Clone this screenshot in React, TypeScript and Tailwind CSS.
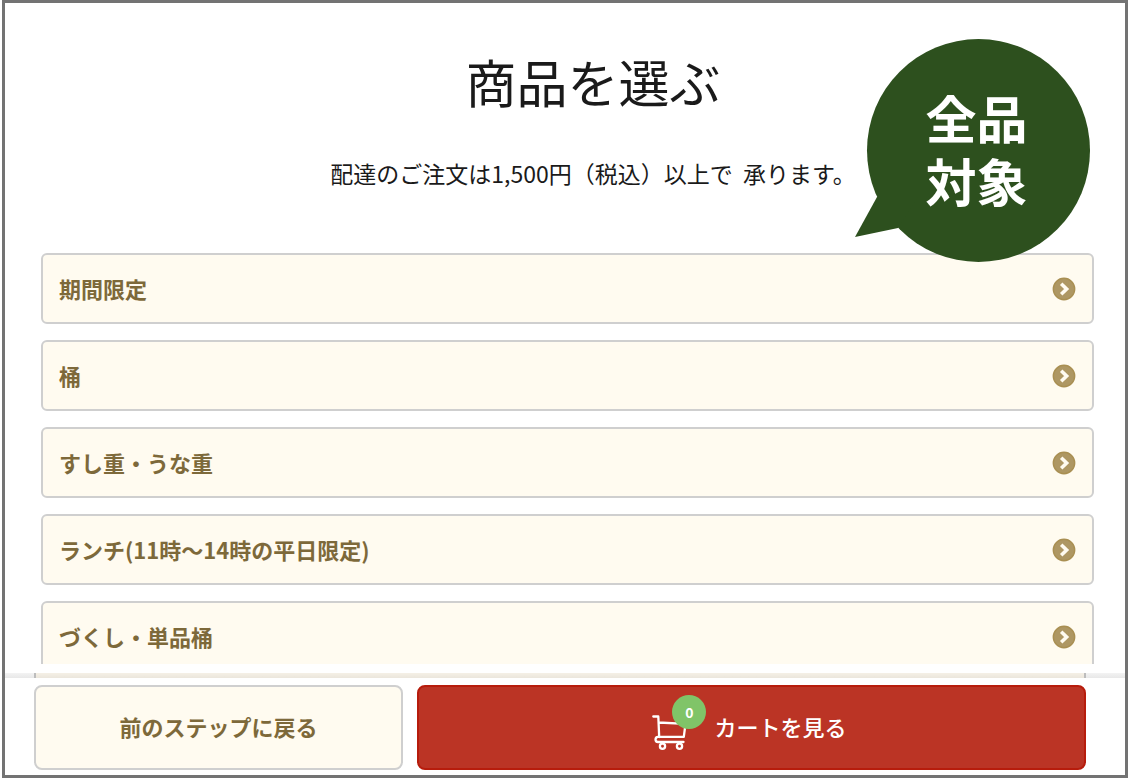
const categories = [
  "期間限定",
  "桶",
  "すし重・うな重",
  "ランチ(11時〜14時の平日限定)",
  "づくし・単品桶",
];

function ArrowIcon() {
  return (
    <svg className="size-6 shrink-0" viewBox="0 0 24 24" fill="none" aria-hidden="true">
      <circle cx="12" cy="12" r="10.7" fill="#ae9763" stroke="#a98f52" strokeWidth="1.400" />
      <path d="M9.200 6.800 14.600 12l-5.400 5.200" stroke="#fffbf0" strokeWidth="3.600" />
    </svg>
  );
}

function CartIcon() {
  return (
    <svg
      className="size-9"
      viewBox="0 0 36 36"
      fill="none"
      stroke="#fff"
      strokeWidth="2.300"
      strokeLinecap="round"
      strokeLinejoin="round"
      aria-hidden="true"
    >
      <path d="M1.300 1.500h5l.9 20.500M6.600 7.500 33.500 8.800l-1.700 13H6c-3.300.3-3.300 5 0 5.200h25.500" />
      <circle cx="10.500" cy="31.200" r="2.600" />
      <circle cx="27.500" cy="31.200" r="2.600" />
    </svg>
  );
}

function Bubble() {
  return (
    <div className="absolute top-9 right-[35px] h-[223px] w-[235px]">
      <svg className="absolute inset-0" viewBox="0 0 235 223" fill="#2d501e" aria-hidden="true">
        <circle cx="123.500" cy="111.500" r="111.500" />
        <path d="M22 158 0 198l43-9 20-31z" />
      </svg>
      <p className="relative flex h-full items-center justify-center pb-1 pl-2 text-[51px] leading-[63px] font-bold text-white">
        全品
        <br />
        対象
      </p>
    </div>
  );
}

export default function App() {
  return (
    <div className="h-screen px-[2px] pb-px font-['Noto_Sans_CJK_JP',sans-serif]">
      <div className="relative flex h-full flex-col overflow-hidden border-3 border-[#737373] bg-white">
        <main className="min-h-0 flex-1 overflow-hidden">
          <header className="pt-[42px] pl-14 text-center text-[#1a1a1a]">
            <h1 className="text-[51px] leading-[72px]">商品を選ぶ</h1>
            <p className="mt-10 text-[23px] leading-8">
              配達のご注文は1,500円（税込）以上で&nbsp; 承ります。
            </p>
          </header>
          <ul className="mt-16 mr-[31px] ml-9 flex flex-col gap-4">
            {categories.map((name) => (
              <li key={name}>
                <button
                  type="button"
                  className="flex h-[71px] w-full items-center justify-between rounded-md border-2 border-[#cfcfcf] bg-[#fffbf0] px-4 text-[22px] font-bold text-[#7d693a]"
                >
                  {name}
                  <ArrowIcon />
                </button>
              </li>
            ))}
          </ul>
        </main>
        <footer className="bg-white pt-[9px]">
          <div className="h-[5px] bg-linear-to-b from-[#f3f3f3] to-[#e8e8e8] pr-[39px] pl-[29px]">
            <div className="h-full border-x-2 border-[#bdbdbd] bg-linear-to-b from-[#f5f0e6] to-[#ebe6dc]" />
          </div>
          <div className="flex gap-[14px] pt-[7px] pr-[39px] pb-[5px] pl-[29px]">
            <button
              type="button"
              className="h-[85px] w-[369px] rounded-lg border-2 border-[#cfcfcf] bg-[#fffbf0] pb-0.5 text-[22px] font-bold text-[#7d693a]"
            >
              前のステップに戻る
            </button>
            <button
              type="button"
              className="flex h-[85px] flex-1 items-center justify-center gap-[26px] rounded-lg border-2 border-[#b71c0c] bg-[#bb3425] pr-1 pb-0.5 text-[22px] font-medium text-white"
            >
              <span className="relative pt-3">
                <CartIcon />
                <span className="absolute -top-2 left-5 flex size-[34px] items-center justify-center rounded-full bg-[#80c468] text-sm font-bold">
                  0
                </span>
              </span>
              カートを見る
            </button>
          </div>
        </footer>
        <Bubble />
      </div>
    </div>
  );
}
